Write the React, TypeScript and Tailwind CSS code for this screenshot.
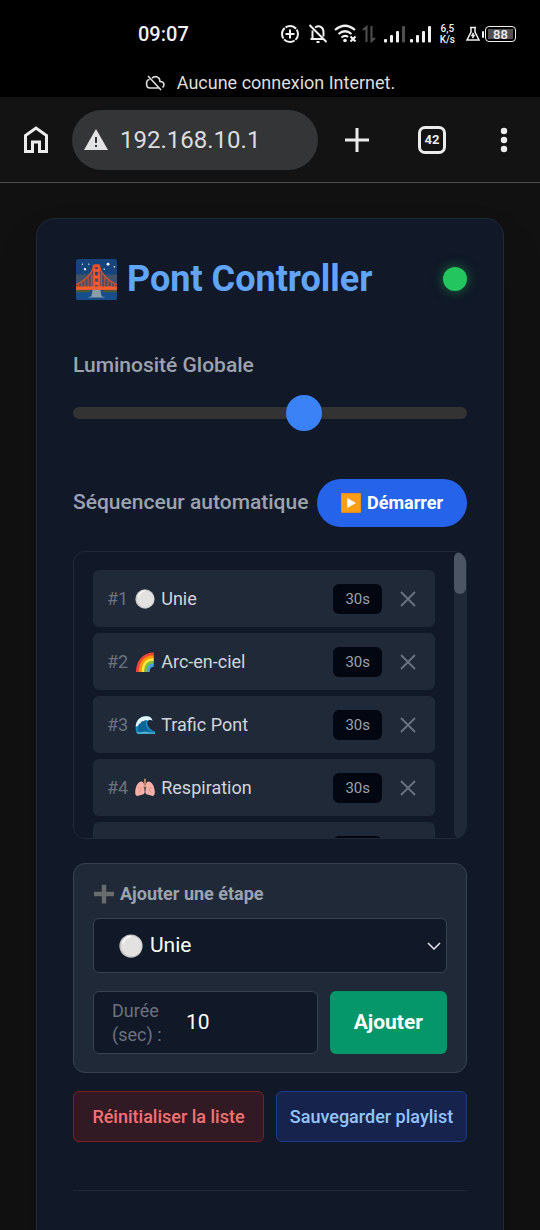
import { useState } from 'react';
import type { ReactNode } from 'react';

type EmojiName = 'bridge' | 'circle' | 'rainbow' | 'wave' | 'lungs' | 'play' | 'plus';

const emojis: Record<EmojiName, ReactNode> = {
  bridge: (
    <>
      <rect width="32" height="32" rx="2" fill="#15457c" />
      <path d="M0 12h32v12H0z" fill="#3f5268" />
      <path d="M0 24h32v6a2 2 0 0 1-2 2H2a2 2 0 0 1-2-2z" fill="#164e8c" />
      <path d="M0 24c5-1.500 9-1 12 1.500L9 26H0zM32 24c-5-1.500-9-1-12 1.500l3 .5h9z" fill="#4b5a34" />
      <path d="M0 20Q10 16 14 6h4q4 10 14 14" fill="none" stroke="#e0522b" />
      <path d="M2 19v5M4.500 18v6M7 16.500V24M9.500 14V24M12 11v13M20 11v13M22.500 14V24M25 16.500V24M27.500 18v6M30 19v5" stroke="#d0512f" strokeWidth=".8" />
      <path d="M13 24V5l1-1h4l1 1v19h-2V6h-2v18z" fill="#ee4e25" />
      <path d="M14 8h4v2h-4zM14 13h4v2h-4zM14 18h4v2h-4zM0 21.500h32V24H0z" fill="#ff5b2d" />
      <path d="M13 24h6l1 5 3 1H9l3-1z" fill="#8b9ea5" />
      <circle cx="5" cy="4" r=".5" fill="#fff" />
      <circle cx="10" cy="4" r=".5" fill="#fff" />
      <circle cx="7" cy="8" r=".9" fill="#fff" />
      <circle cx="25" cy="4" r="1.100" fill="#fff" />
      <circle cx="30" cy="6" r=".6" fill="#fff" />
      <circle cx="22" cy="8" r=".5" fill="#fff" />
    </>
  ),
  circle: (
    <>
      <circle cx="16" cy="16" r="15.500" fill="#c3c4c4" />
      <circle cx="16.500" cy="16" r="13.800" fill="#e3e2e1" />
      <path d="M5 12Q8 4 15 3" fill="none" stroke="#fff" strokeWidth="2" strokeLinecap="round" />
    </>
  ),
  rainbow: (
    <g fill="none" strokeWidth="4.800">
      <path d="M4 32C4 15 14 3 30 3" stroke="#f44336" />
      <path d="M8.500 32C8.500 17 16 7.500 30 7.500" stroke="#ff9800" />
      <path d="M13 32C13 19 19 12 30 12" stroke="#ffe63b" />
      <path d="M17 32C17 23 21 16.500 30 16.500" stroke="#7cc142" />
      <path d="M21 32C21 25 24 21 30 21" stroke="#42a5f5" />
    </g>
  ),
  wave: (
    <>
      <path d="M1 21C1 9 9 1 19 2c5 0 8 3 9 7-3-2-7-2-8 2-1 6 4 13 12 15v4H5c-3-2-4-5-4-9z" fill="#1686bd" />
      <path d="M5 25C5 14 10 8 17 8c-2 8 2 17 12 20H6z" fill="#0b6496" />
      <path d="M1 18C2 8 9 1 19 2c5 0 8 3 9 7-3-2-6-2-7 0-3-2-5-1-7 1-3-1-4 1-5 3-3 0-3 2-4 4-2 0-3 2-4 1z" fill="#e5f7fc" />
      <path d="M2 27c6 2 13-1 18 0s8 2 12 1v2H4z" fill="#4fb9df" />
    </>
  ),
  lungs: (
    <>
      <path d="M14 8C9 2 2 9 .5 20c-1 8 2 10 6 8 3-2 9 0 9-6zM18 8c5-6 12 1 13.500 12 1 8-2 10-6 8-3-2-9 0-9-6z" fill="#f6b0aa" />
      <path d="M5 15l4 2-2 6M27 15l-4 2 2 6" stroke="#de827e" strokeWidth="1.100" fill="none" />
      <path d="M16 1v11l-4 4M16 12l4 4" stroke="#e9a27a" strokeWidth="2.400" fill="none" />
    </>
  ),
  play: (
    <>
      <rect width="32" height="32" rx="2" fill="#e58a19" />
      <path d="M1 1h30v29H1z" fill="#fb9d17" />
      <path d="M10 8v16l14-8z" fill="#fff" />
    </>
  ),
  plus: <path d="M12.500 1h7v11.500H32v7H19.500V31h-7V19.500H0v-7h12.500z" fill="#696b6c" />,
};

const Emoji = ({ name, className }: { name: EmojiName; className: string }) => (
  <svg viewBox="0 0 32 32" className={`shrink-0 ${className}`} aria-hidden="true">
    {emojis[name]}
  </svg>
);

const steps: { id: number; emoji: EmojiName; name: string; duration: number }[] = [
  { id: 1, emoji: 'circle', name: 'Unie', duration: 30 },
  { id: 2, emoji: 'rainbow', name: 'Arc-en-ciel', duration: 30 },
  { id: 3, emoji: 'wave', name: 'Trafic Pont', duration: 30 },
  { id: 4, emoji: 'lungs', name: 'Respiration', duration: 30 },
  { id: 5, emoji: 'circle', name: 'Unie', duration: 30 },
];

const Signal = ({ weak }: { weak?: boolean }) => (
  <svg viewBox="0 0 22 18" className="h-[18px] w-[22px]" fill="#f1f1f1" aria-hidden="true">
    <rect x="0" y="14" width="3" height="3.500" rx="1" />
    <rect x="6" y="10" width="3" height="7.500" rx="1" />
    <rect x="12" y="6" width="3" height="11.500" rx="1" />
    <rect x="18" y="1" width="3" height="16.500" rx="1" fill={weak ? '#505050' : '#f1f1f1'} />
  </svg>
);

const StatusBar = () => (
  <div className="flex h-[68px] shrink-0 items-center justify-between bg-black pl-[138px] pr-6 text-[#f1f1f1]">
    <span className="text-xl font-medium">09:07</span>
    <div className="flex items-center">
      <svg viewBox="0 0 20 20" className="h-5 w-5" fill="none" stroke="currentColor" strokeWidth="2" aria-hidden="true">
        <circle cx="10" cy="10" r="8" strokeDasharray="11.570 1" strokeDashoffset="5" />
        <path d="M10 5.500v9M5.500 10h9" />
      </svg>
      <svg viewBox="0 0 20 20" className="ml-2 h-5 w-5" fill="none" stroke="currentColor" strokeWidth="2" aria-hidden="true">
        <path d="M1.500 1l17 17M4.500 6.500V15H2.500h12.500M7 3.500C12 .5 15.500 4 15.500 8v4.500M8.500 18h3" />
      </svg>
      <svg viewBox="0 0 24 20" className="ml-1.5 h-5 w-6" fill="none" stroke="currentColor" strokeWidth="2.200" aria-hidden="true">
        <path d="M1 6Q11-2.500 21 6M4.500 10Q11 4.500 17.500 10M7.500 13.500Q11 10.500 14 13M16.500 12.500l5 5M21.500 12.500l-5 5" />
        <circle cx="11" cy="16.500" r="1.800" fill="currentColor" stroke="none" />
      </svg>
      <svg viewBox="0 0 14 18" className="ml-1 h-[18px] w-3.5" fill="none" stroke="#505050" strokeWidth="2" aria-hidden="true">
        <path d="M1 5l3.500-3v15M9.500 1v15l3.500-3" />
      </svg>
      <span className="ml-2"><Signal weak /></span>
      <span className="ml-1"><Signal /></span>
      <span className="ml-2 text-center text-[10px] font-medium leading-[11px]">
        6,5<br />K/s
      </span>
      <svg viewBox="0 0 16 16" className="ml-2.5 h-4 w-4" fill="none" stroke="currentColor" strokeWidth="1.500" aria-hidden="true">
        <path d="M5 1.500h6M6 2v4L2 14h12L10 6V2M8.500 7L7 9.500h2L7.500 12" />
      </svg>
      <span className="ml-px h-[7px] w-0.5 rounded-full bg-[#f1f1f1]" />
      <span className="ml-px flex h-4 w-[31px] items-center justify-center rounded-[4px] border border-[#f1f1f1] bg-black p-0.5">
        <span className="flex h-full w-full items-center justify-center bg-[#505050] text-[13px] font-medium leading-none">88</span>
      </span>
    </div>
  </div>
);

const BrowserBar = () => (
  <>
    <div className="flex h-[29px] shrink-0 items-center justify-center bg-black text-lg leading-6 text-[#dedede]">
      <svg viewBox="0 0 20 16" className="mr-3 h-4 w-5" fill="none" stroke="currentColor" strokeWidth="1.600" aria-hidden="true">
        <path d="M3 1l13 14M4.500 4.500C.5 5 .5 13 5 13h9M7 3c4-3 8-.5 8 3.500 5 0 4.500 4.500 2.500 6" />
      </svg>
      Aucune connexion Internet.
    </div>
    <header className="flex h-[86px] shrink-0 items-center border-b border-[#4a4a4a] bg-[#131314] text-[#ececec]">
      <button aria-label="Accueil" className="flex w-[72px] justify-center">
        <svg viewBox="0 0 24 27" className="h-[27px] w-6" fill="none" stroke="currentColor" strokeWidth="3" aria-hidden="true">
          <path d="M1.500 25.500V9.500L12 2l10.500 7.500v16h-7V16h-7v9.500z" />
        </svg>
      </button>
      <div className="flex h-[60px] min-w-0 flex-1 items-center gap-3 rounded-full bg-[#343537] pl-3">
        <svg viewBox="0 0 24 21" className="h-[21px] w-6 shrink-0" aria-hidden="true">
          <path d="M12 0l12 21H0z" fill="#e3e3e3" />
          <path d="M12 8v6M12 16v2" stroke="#343537" strokeWidth="2" />
        </svg>
        <input
          type="text"
          aria-label="Adresse"
          defaultValue="192.168.10.1"
          className="min-w-0 flex-1 bg-transparent text-2xl text-[#dcdddf] outline-none"
        />
      </div>
      <button aria-label="Nouvel onglet" className="flex w-[78px] justify-center">
        <svg viewBox="0 0 24 24" className="h-6 w-6" stroke="currentColor" strokeWidth="3" aria-hidden="true">
          <path d="M12 0v24M0 12h24" />
        </svg>
      </button>
      <button aria-label="Onglets" className="flex w-[72px] justify-center">
        <span className="flex h-7 w-7 items-center justify-center rounded-[7px] border-3 border-[#ececec] text-[13px] font-bold">42</span>
      </button>
      <button aria-label="Menu" className="flex w-[72px] justify-center">
        <svg viewBox="0 0 8 26" className="h-[26px] w-2" fill="currentColor" aria-hidden="true">
          <circle cx="4" cy="4" r="3.200" />
          <circle cx="4" cy="13" r="3.200" />
          <circle cx="4" cy="22" r="3.200" />
        </svg>
      </button>
    </header>
  </>
);

const StepList = () => (
  <div className="mt-6 flex h-[288px] overflow-hidden rounded-xl border border-[#1f2937]">
    <ul className="min-w-0 flex-1 space-y-1.5 overflow-y-auto px-[19px] py-[18px] [scrollbar-width:none]">
      {steps.map((step) => (
        <li key={step.id} className="flex h-[57px] items-center rounded-md bg-[#1f2937] px-3.5">
          <span className="text-lg text-[#6b7280]">#{step.id}</span>
          <Emoji name={step.emoji} className="ml-[7px] mr-1.5 h-5 w-5" />
          <span className="flex-1 text-lg text-[#d1d5db]">{step.name}</span>
          <span className="rounded-md bg-[#030712] px-3 py-1 text-[15px] leading-[22px] text-[#9ca3af]">
            {step.duration}s
          </span>
          <button aria-label={`Supprimer ${step.name}`} className="ml-[18px] mr-[5px] text-[#6b7280]">
            <svg viewBox="0 0 16 16" className="h-4 w-4" stroke="currentColor" strokeWidth="1.800" aria-hidden="true">
              <path d="M1 1l14 14M15 1L1 15" />
            </svg>
          </button>
        </li>
      ))}
    </ul>
    <div className="w-3 rounded-full bg-[#1f2937]">
      <div className="h-[42px] rounded-full bg-[#4b5563]" />
    </div>
  </div>
);

const AddStep = () => {
  const [duration, setDuration] = useState('10');

  return (
    <section className="mt-6 rounded-xl border border-[#374151] bg-[#1f2937] px-[19px] py-[18px]">
      <h2 className="flex items-center text-lg font-bold leading-6 text-[#9ca3af]">
        <Emoji name="plus" className="ml-px mr-1.5 h-5 w-5" />
        Ajouter une étape
      </h2>
      <div className="relative mt-3">
        <select
          aria-label="Effet"
          className="block h-[55px] w-full appearance-none rounded-md border border-[#374151] bg-[#111827] pl-14 pr-10 text-[21px] text-white"
        >
          <option>Unie</option>
          <option>Arc-en-ciel</option>
          <option>Trafic Pont</option>
          <option>Respiration</option>
        </select>
        <div className="pointer-events-none absolute inset-0 flex items-center justify-between pl-[26px] pr-1.5">
          <Emoji name="circle" className="h-6 w-6" />
          <svg viewBox="0 0 14 8" className="h-2 w-3.5" fill="none" stroke="#e5e7eb" strokeWidth="1.500" aria-hidden="true">
            <path d="M1 1l6 6 6-6" />
          </svg>
        </div>
      </div>
      <div className="mt-[18px] flex gap-3">
        <div className="flex h-[63px] min-w-0 flex-1 items-center rounded-md border border-[#374151] bg-[#111827] px-[18px]">
          <label htmlFor="duration" className="w-[54px] shrink-0 text-lg leading-6 text-[#6b7280]">
            Durée (sec) :
          </label>
          <input
            id="duration"
            type="text"
            inputMode="numeric"
            value={duration}
            onChange={(e) => setDuration(e.target.value)}
            className="ml-5 min-w-0 flex-1 bg-transparent text-[21px] text-white outline-none"
          />
        </div>
        <button className="rounded-md bg-[#059669] px-6 text-[21px] font-bold text-white">Ajouter</button>
      </div>
    </section>
  );
};

export default function App() {
  const [brightness, setBrightness] = useState(152);

  return (
    <div className="flex h-screen flex-col overflow-hidden bg-[#111111] font-['Roboto','Noto_Sans',sans-serif]">
      <StatusBar />
      <BrowserBar />
      <main className="flex-1 px-9 pt-[35px]">
        <div className="rounded-[18px] border border-[#1f2937] bg-[#111827] p-9 shadow-2xl">
          <div className="flex h-12 items-center justify-between">
            <h1 className="flex items-center text-4xl font-bold text-[#60a5fa]">
              <Emoji name="bridge" className="ml-[3px] mr-2.5 h-[41px] w-[41px]" />
              Pont Controller
            </h1>
            <span className="h-6 w-6 rounded-full bg-[#22c55e] shadow-[0_0_12px_#22c55e80]" />
          </div>

          <label htmlFor="brightness" className="mt-12 block text-[21px] font-medium leading-7 text-[#9ca3af]">
            Luminosité Globale
          </label>
          <input
            id="brightness"
            type="range"
            min={0}
            max={255}
            value={brightness}
            onChange={(e) => setBrightness(Number(e.target.value))}
            className="mt-4 block h-9 w-full appearance-none bg-transparent [&::-webkit-slider-runnable-track]:h-3 [&::-webkit-slider-runnable-track]:rounded-full [&::-webkit-slider-runnable-track]:bg-[#333333] [&::-webkit-slider-thumb]:-mt-3 [&::-webkit-slider-thumb]:h-9 [&::-webkit-slider-thumb]:w-9 [&::-webkit-slider-thumb]:appearance-none [&::-webkit-slider-thumb]:rounded-full [&::-webkit-slider-thumb]:bg-[#3b82f6]"
          />

          <div className="mt-12 flex items-center justify-between">
            <h2 className="whitespace-nowrap text-[21px] font-medium text-[#9ca3af]">Séquenceur automatique</h2>
            <button className="flex h-12 items-center gap-1.5 rounded-full bg-[#2563eb] px-6 text-lg font-bold text-white">
              <Emoji name="play" className="h-5 w-5" />
              Démarrer
            </button>
          </div>

          <StepList />
          <AddStep />

          <div className="mt-[18px] grid grid-cols-2 gap-3 text-lg font-medium">
            <button className="h-[51px] whitespace-nowrap rounded-md border border-[#7f1d1d] bg-[#321a25] text-[#f87171]">
              Réinitialiser la liste
            </button>
            <button className="h-[51px] whitespace-nowrap rounded-md border border-[#1e3a8a] bg-[#15234d] text-[#93c5fd]">
              Sauvegarder playlist
            </button>
          </div>

          <div className="mt-12 h-24 border-t border-[#1f2937]" />
        </div>
      </main>
    </div>
  );
}
